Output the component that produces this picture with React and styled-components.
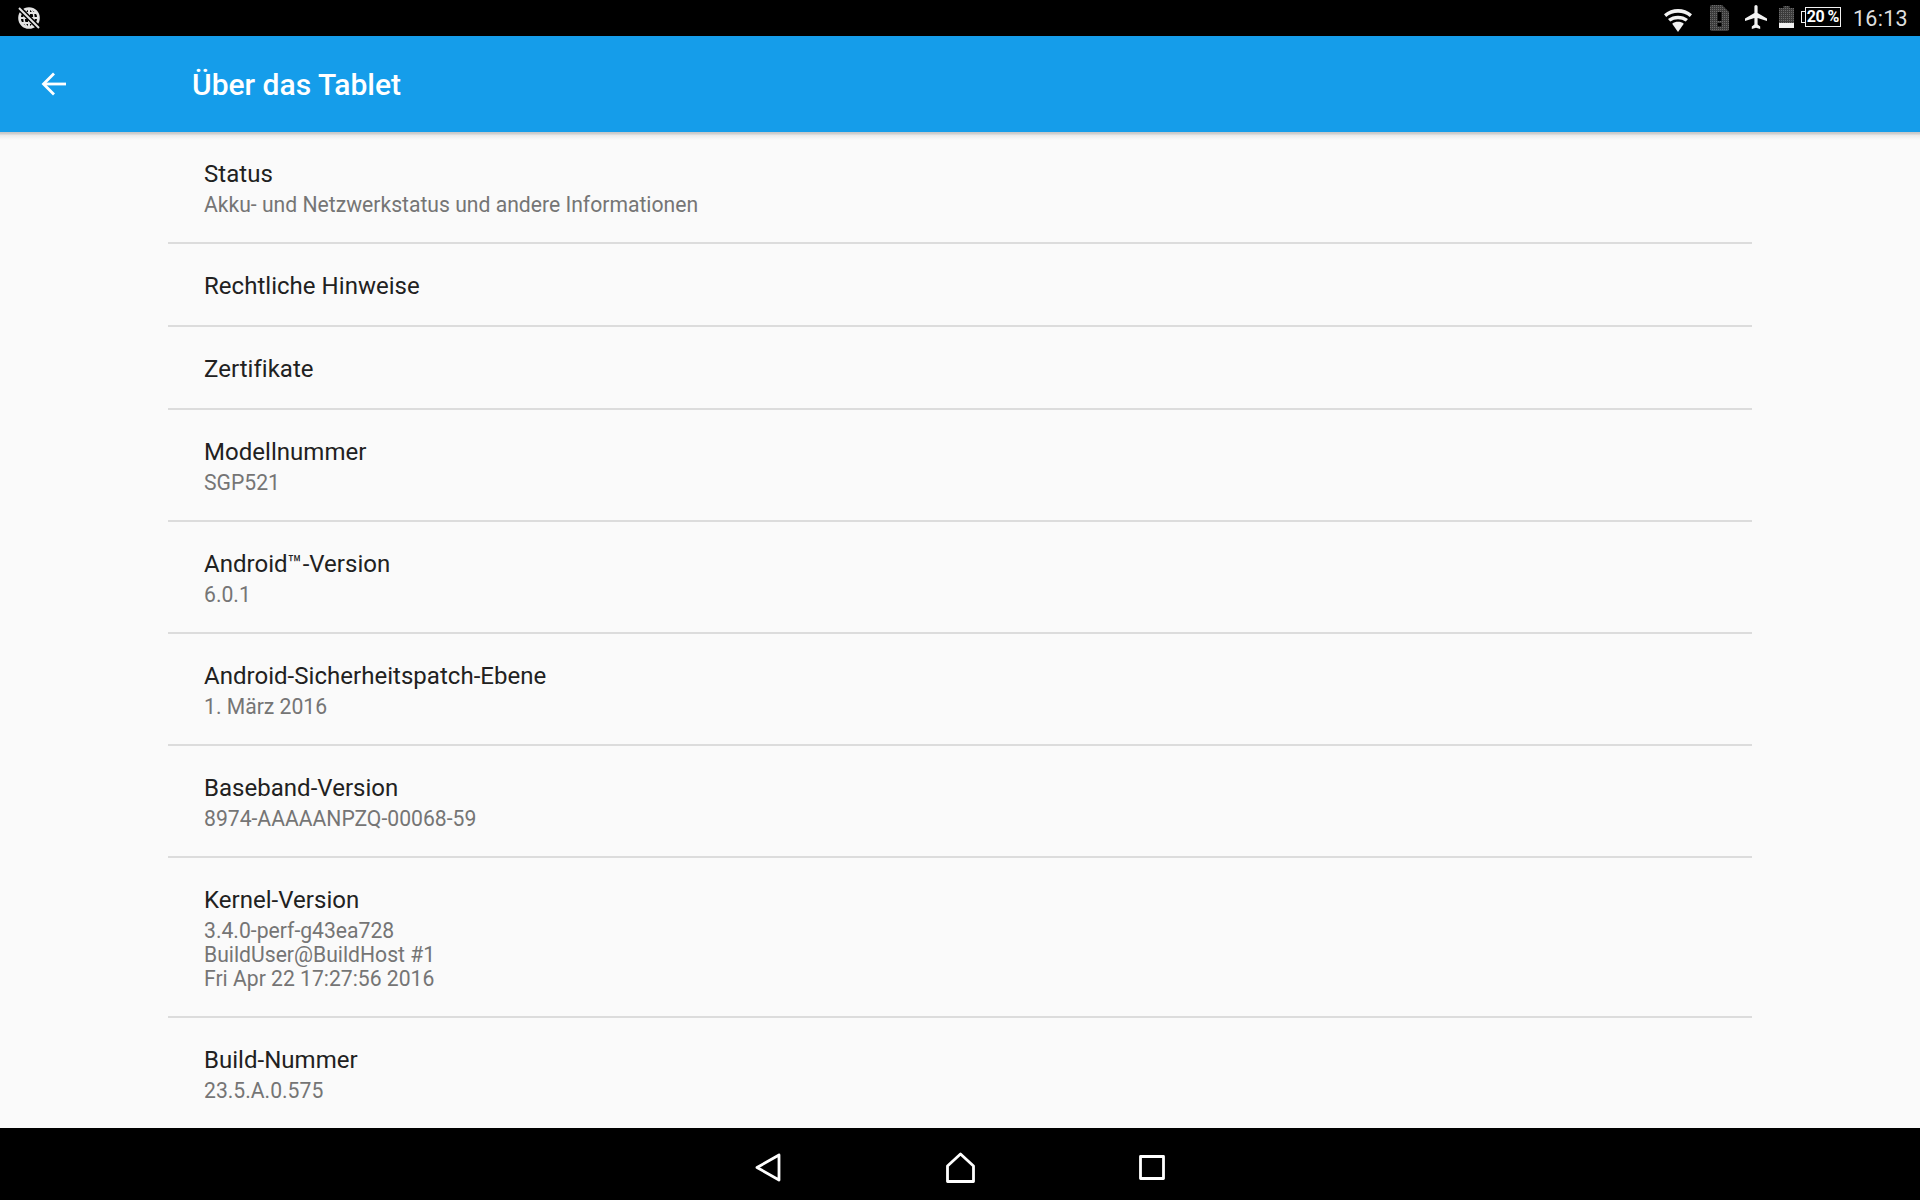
import styled, { createGlobalStyle } from "styled-components"

const GlobalStyle = createGlobalStyle`
    html, body {
        margin: 0;
        padding: 0;
        background: #000;
    }
    body {
        font-family: Roboto, "Liberation Sans", sans-serif;
    }
`

const items = [
    { title: "Status", lines: ["Akku- und Netzwerkstatus und andere Informationen"] },
    { title: "Rechtliche Hinweise", lines: [] },
    { title: "Zertifikate", lines: [] },
    { title: "Modellnummer", lines: ["SGP521"] },
    { title: "Android™-Version", lines: ["6.0.1"] },
    { title: "Android-Sicherheitspatch-Ebene", lines: ["1. März 2016"] },
    { title: "Baseband-Version", lines: ["8974-AAAAANPZQ-00068-59"] },
    { title: "Kernel-Version", lines: ["3.4.0-perf-g43ea728", "BuildUser@BuildHost #1", "Fri Apr 22 17:27:56 2016"] },
    { title: "Build-Nummer", lines: ["23.5.A.0.575"] },
]

function GlobeOffIcon() {
    return (
        <svg width="24" height="24" viewBox="0 0 24 24">
            <circle cx="12" cy="12" r="9.5" fill="none" stroke="#e4e4e4" strokeWidth="2.6" />
            <path d="M12 3v18M3 12h18M5 7h14M5 17h14" stroke="#e4e4e4" strokeWidth="2" />
            <ellipse cx="12" cy="12" rx="5" ry="9" fill="none" stroke="#e4e4e4" strokeWidth="1.6" />
            <path d="M2 2l20 20" stroke="#000" strokeWidth="5" />
            <path d="M2 2l20 20" stroke="#e4e4e4" strokeWidth="2" />
        </svg>
    )
}

function WifiIcon() {
    return (
        <svg width="28" height="23" viewBox="0 0 28 23">
            <path d="M0 5.2C8-1.7 20-1.7 28 5.2L25.8 8C19 2.4 9 2.4 2.2 8Z" fill="#f2f2f2" />
            <path d="M4 10C9.5 5.5 18.5 5.5 24 10L21.8 12.6C17.5 9.3 10.5 9.3 6.2 12.6Z" fill="#f2f2f2" />
            <path d="M8.2 14.8C11.5 12.2 16.5 12.2 19.8 14.8L14 23Z" fill="#f2f2f2" />
        </svg>
    )
}

function SimAlertIcon() {
    return (
        <svg width="19" height="26" viewBox="0 0 19 26">
            <defs>
                <pattern id="simDots" width="2" height="2" patternUnits="userSpaceOnUse">
                    <rect width="2" height="2" fill="#3c3c3c" />
                    <rect width="1" height="1" fill="#6a6a6a" />
                </pattern>
            </defs>
            <path d="M2 0H12L19 7V24a2 2 0 0 1-2 2H2a2 2 0 0 1-2-2V2a2 2 0 0 1 2-2Z" fill="url(#simDots)" />
            <path d="M7.5 7h4v9h-4zM7.5 18h4v3.5h-4z" fill="#000" />
        </svg>
    )
}

function PlaneIcon() {
    return (
        <svg width="22" height="24" viewBox="0 0 22 24">
            <path d="M9.4 1.8C9.4.8 10.1 0 11 0s1.600.8 1.600 1.800V8L22 13.600V16l-9.400-3v6.400l2.600 2V24L11 22.800 6.800 24v-2.600l2.600-2V13L0 16v-2.400L9.400 8Z" fill="#f2f2f2" />
        </svg>
    )
}

function BatteryIcon() {
    return (
        <svg width="15" height="22" viewBox="0 0 15 22">
            <defs>
                <pattern id="batDots" width="2" height="2" patternUnits="userSpaceOnUse">
                    <rect width="2" height="2" fill="#3c3c3c" />
                    <rect width="1" height="1" fill="#6a6a6a" />
                </pattern>
            </defs>
            <path d="M4.500 0h6v2H15v16H0V2h4.500Z" fill="url(#batDots)" />
            <rect y="17" width="15" height="5" fill="#f2f2f2" />
        </svg>
    )
}

function BackArrow() {
    return (
        <svg width="26" height="24" viewBox="0 0 26 24" fill="none" stroke="#fff" strokeWidth="2.8">
            <path d="M25 12H3" />
            <path d="M13 1.500L2.500 12L13 22.500" />
        </svg>
    )
}

function NavBack() {
    return (
        <svg width="26" height="29" viewBox="0 0 26 29" fill="none" stroke="#fff" strokeWidth="2.8" strokeLinejoin="round">
            <path d="M24 2L2 14.500L24 27Z" />
        </svg>
    )
}

function NavHome() {
    return (
        <svg width="29" height="31" viewBox="0 0 29 31" fill="none" stroke="#fff" strokeWidth="2.8" strokeLinejoin="round">
            <path d="M14.500 2L27.500 14V29.500H1.500V14Z" />
        </svg>
    )
}

function NavRecent() {
    return (
        <svg width="26" height="25" viewBox="0 0 26 25" fill="none" stroke="#fff" strokeWidth="2.8" strokeLinejoin="round">
            <rect x="1.500" y="1.500" width="23" height="22" />
        </svg>
    )
}

export default function App() {
    return (
        <Screen>
            <GlobalStyle />
            <StatusBar>
                <GlobeOffIcon />
                <StatusRight>
                    <WifiSlot><WifiIcon /></WifiSlot>
                    <SimSlot><SimAlertIcon /></SimSlot>
                    <PlaneSlot><PlaneIcon /></PlaneSlot>
                    <BatterySlot><BatteryIcon /></BatterySlot>
                    <BatteryLabel>20 %</BatteryLabel>
                    <Clock>16:13</Clock>
                </StatusRight>
            </StatusBar>
            <AppBar>
                <BackButton>
                    <BackArrow />
                </BackButton>
                <Title>Über das Tablet</Title>
            </AppBar>
            <Content>
                <List>
                    {items.map((item) => (
                        <Row key={item.title} $single={item.lines.length === 0}>
                            <RowTitle>{item.title}</RowTitle>
                            <RowLines>
                                {item.lines.map((line) => (
                                    <RowSub key={line}>{line}</RowSub>
                                ))}
                            </RowLines>
                        </Row>
                    ))}
                </List>
            </Content>
            <NavBar>
                <NavSlot><NavBack /></NavSlot>
                <NavSlot><NavHome /></NavSlot>
                <NavSlot><NavRecent /></NavSlot>
            </NavBar>
        </Screen>
    )
}

const Screen = styled.div`
    width: 1920px;
    height: 1200px;
    display: flex;
    flex-direction: column;
    overflow: hidden;
    background-color: #fafafa;
`

const StatusBar = styled.div`
    height: 36px;
    flex: none;
    background-color: #000;
    display: flex;
    align-items: center;
    justify-content: space-between;
    padding: 0 12px 0 17px;
`

const StatusRight = styled.div`
    display: flex;
    align-items: center;
`

const WifiSlot = styled.div`
    display: flex;
    margin-top: 4px;
`

const SimSlot = styled.div`
    display: flex;
    margin-left: 18px;
`

const PlaneSlot = styled.div`
    display: flex;
    margin-left: 16px;
    margin-top: -2px;
`

const BatterySlot = styled.div`
    display: flex;
    margin-left: 12px;
    margin-top: -2px;
`

const BatteryLabel = styled.div`
    position: relative;
    width: 36px;
    height: 20px;
    margin-left: 11px;
    margin-top: -3px;
    border: 1.5px solid #f2f2f2;
    box-sizing: border-box;
    color: #fff;
    font-size: 16px;
    font-weight: 700;
    line-height: 17px;
    letter-spacing: -0.5px;
    text-align: right;
    padding-right: 1px;
    white-space: nowrap;

    &::before {
        content: "";
        position: absolute;
        left: -5px;
        top: 3px;
        width: 3px;
        height: 10px;
        border: 1.5px solid #f2f2f2;
        border-right: none;
    }
`

const Clock = styled.div`
    margin-left: 12px;
    color: #dedede;
    font-size: 21.5px;
    letter-spacing: 0.3px;
`

const AppBar = styled.header`
    height: 96px;
    flex: none;
    background-color: #159dea;
    display: flex;
    align-items: center;
    position: relative;
    z-index: 1;

    &::after {
        content: "";
        position: absolute;
        left: 0;
        right: 0;
        top: 100%;
        height: 8px;
        background: linear-gradient(#c6c6c6 0, #cecece 20%, #ececec 45%, #fafafa 100%);
    }
`

const BackButton = styled.div`
    width: 192px;
    flex: none;
    padding-left: 41px;
    box-sizing: border-box;
    display: flex;
    align-items: center;
`

const Title = styled.h1`
    margin: 0;
    color: #fff;
    font-size: 30px;
    font-weight: 500;
`

const Content = styled.main`
    flex: 1;
    min-height: 0;
    overflow: hidden;
    padding: 0 168px;
`

const List = styled.div`
    display: flex;
    flex-direction: column;
`

const Row = styled.div`
    padding: ${({ $single }) => ($single ? "26px 36px 23px" : "26px 36px 25px")};
    border-bottom: 2px solid #dcdcdc;

    &:last-child {
        border-bottom: none;
    }
`

const RowTitle = styled.div`
    color: #212121;
    font-size: 24px;
    line-height: 32px;
    letter-spacing: 0.03px;
`

const RowLines = styled.div`
    &:not(:empty) {
        margin-top: 3px;
    }
`

const RowSub = styled.div`
    color: #757575;
    font-size: 21.15px;
    line-height: 24px;
`

const NavBar = styled.nav`
    height: 72px;
    flex: none;
    padding-top: 6px;
    box-sizing: border-box;
    background-color: #000;
    display: flex;
    align-items: center;
    justify-content: center;
`

const NavSlot = styled.div`
    width: 192px;
    display: flex;
    justify-content: center;
`
